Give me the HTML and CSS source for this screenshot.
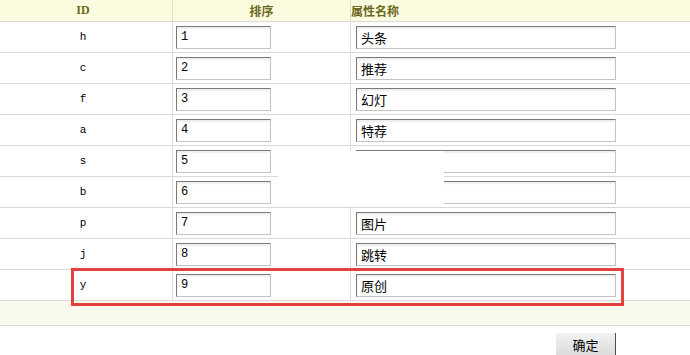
FILE: index.html
```html
<!DOCTYPE html>
<html>
<head>
<meta charset="utf-8">
<link rel="stylesheet" href="styles.css">
</head>
<body>
<div class="page">
  <table class="attr-table">
    <thead>
      <tr>
        <th class="col-id">ID</th>
        <th class="col-sort">排序</th>
        <th class="col-name">属性名称</th>
      </tr>
    </thead>
    <tbody>
      <tr><td class="col-id">h</td><td class="col-sort"><input class="txt-sort" value="1"></td><td class="col-name"><input class="txt-name" value="头条"></td></tr>
      <tr><td class="col-id">c</td><td class="col-sort"><input class="txt-sort" value="2"></td><td class="col-name"><input class="txt-name" value="推荐"></td></tr>
      <tr><td class="col-id">f</td><td class="col-sort"><input class="txt-sort" value="3"></td><td class="col-name"><input class="txt-name" value="幻灯"></td></tr>
      <tr><td class="col-id">a</td><td class="col-sort"><input class="txt-sort" value="4"></td><td class="col-name"><input class="txt-name" value="特荐"></td></tr>
      <tr><td class="col-id">s</td><td class="col-sort"><input class="txt-sort" value="5"></td><td class="col-name"><input class="txt-name" value=""></td></tr>
      <tr><td class="col-id">b</td><td class="col-sort"><input class="txt-sort" value="6"></td><td class="col-name"><input class="txt-name" value=""></td></tr>
      <tr><td class="col-id">p</td><td class="col-sort"><input class="txt-sort" value="7"></td><td class="col-name"><input class="txt-name" value="图片"></td></tr>
      <tr><td class="col-id">j</td><td class="col-sort"><input class="txt-sort" value="8"></td><td class="col-name"><input class="txt-name" value="跳转"></td></tr>
      <tr><td class="col-id">y</td><td class="col-sort"><input class="txt-sort" value="9"></td><td class="col-name"><input class="txt-name" value="原创"></td></tr>
      <tr class="foot"><td colspan="3"></td></tr>
    </tbody>
  </table>
  <div class="actions">
    <button class="btn-ok">确定</button>
  </div>
  <div class="mask"></div>
  <div class="highlight"></div>
</div>
</body>
</html>
```

FILE: styles.css
```css
body {
  margin: 0;
  background: #fff;
  font-family: "Noto Sans CJK SC", sans-serif;
  font-size: 12px;
  color: #000;
}

.page {
  position: relative;
  width: 690px;
}

.attr-table {
  width: 690px;
  border-collapse: separate;
  border-spacing: 0;
  table-layout: fixed;
}

.attr-table th,
.attr-table td {
  padding: 0;
  border-bottom: 1px solid #d9d9d9;
  border-right: 1px solid #dcdcdc;
}

.attr-table th.col-name,
.attr-table td.col-name {
  border-right: 0;
}

.attr-table th {
  height: 21px;
  background: #fbfbe0;
  color: #6b681c;
  font-weight: bold;
  font-size: 12px;
  line-height: 21px;
  border-right-color: #e2e2cc;
}

.col-id {
  width: 173px;
  box-sizing: border-box;
  padding-right: 6px;
  text-align: center;
}

.col-sort {
  width: 178px;
  box-sizing: border-box;
  text-align: center;
}

.attr-table th.col-id {
  font-family: "Liberation Serif", serif;
  font-size: 12px;
  padding-right: 6px;
}

.attr-table th.col-name {
  text-align: left;
}

.attr-table td {
  height: 30px;
  vertical-align: middle;
}

.attr-table td.col-id {
  font-family: "Liberation Mono", monospace;
  font-size: 11px;
  padding-right: 6px;
}

.attr-table td.col-sort {
  text-align: left;
  padding-left: 3px;
}

.attr-table td.col-name {
  padding-left: 5px;
}

.txt-sort,
.txt-name {
  display: block;
  box-sizing: border-box;
  height: 23px;
  margin: 0;
  padding: 0 4px;
  border: 1px solid;
  border-color: #7a7a7a #c4c4c4 #c4c4c4 #7a7a7a;
  box-shadow: inset 0 2px 2px #eeeeee;
  background: #fff;
  font-family: "Liberation Mono", "Noto Sans CJK SC", monospace;
  font-size: 12px;
  color: #000;
  outline: none;
}

.txt-name {
  width: 260px;
  font-size: 13px;
}

.txt-sort {
  width: 95px;
}

.attr-table tr.foot td {
  height: 24px;
  background: #f9f9ee;
  border-right: 0;
}

.actions {
  display: flex;
  justify-content: flex-end;
  padding: 7px 74px 0 0;
}

.btn-ok {
  width: 60px;
  height: 22px;
  padding: 0;
  border: 0;
  border-right: 1px solid #4e4e4e;
  background: linear-gradient(#f2f2f2, #dcdcdc);
  font-family: "Noto Sans CJK SC", sans-serif;
  font-size: 13px;
  color: #000;
  cursor: pointer;
}

/* blank layer lying over rows s / b */
.mask {
  position: absolute;
  left: 278px;
  top: 151px;
  width: 166px;
  height: 55px;
  background: #fff;
}

.highlight {
  position: absolute;
  left: 71px;
  top: 268px;
  width: 553px;
  height: 38px;
  box-sizing: border-box;
  border: 3px solid #e4413f;
}
```
